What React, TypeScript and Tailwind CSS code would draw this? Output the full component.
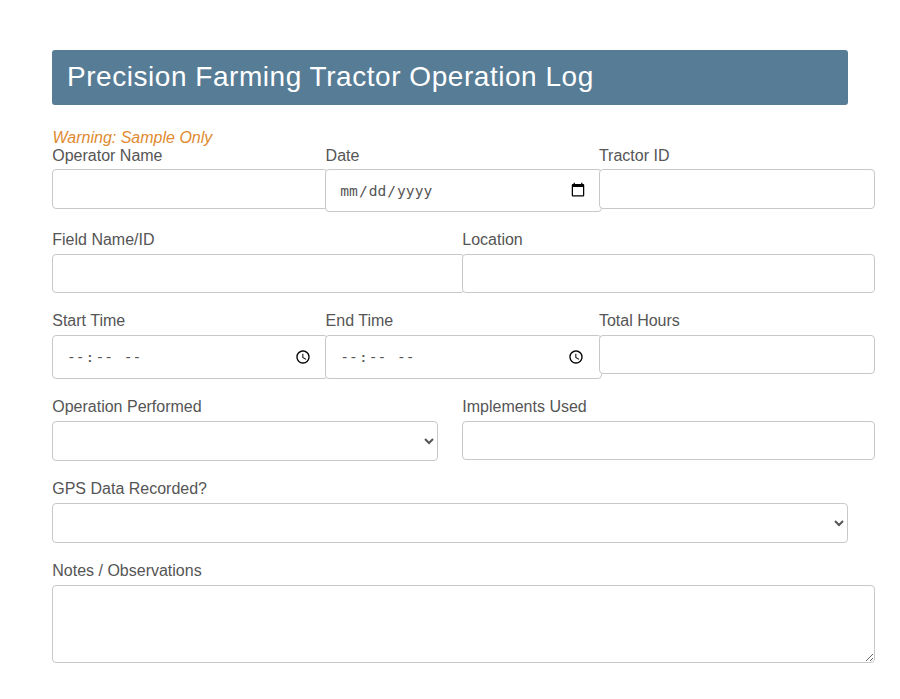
import type { ReactNode } from 'react'
import clsx from 'clsx'

const CONTROL = 'block rounded border border-[#c8c8c8] bg-white px-[13px] text-base text-[#555] outline-none'
const WIDE = 'w-[calc(100%+27px)]'

function Field({ id, label, first, children }: { id: string; label: string; first?: boolean; children: ReactNode }) {
  return (
    <div className="min-w-0 pr-6">
      <label
        htmlFor={id}
        className={clsx('block whitespace-nowrap pl-[0.25px] leading-[18px]', first ? 'mb-1 h-[19px] pt-px' : 'mb-[5px] h-[18px]')}
      >
        {label}
      </label>
      {children}
    </div>
  )
}

function TextField({ id, label, first, height = 'h-[39px]' }: { id: string; label: string; first?: boolean; height?: string }) {
  return (
    <Field id={id} label={label} first={first}>
      <input id={id} type="text" className={clsx(CONTROL, WIDE, height, 'relative')} />
    </Field>
  )
}

function PickerField({ id, label, type, first, height }: { id: string; label: string; type: 'date' | 'time'; first?: boolean; height: string }) {
  return (
    <Field id={id} label={label} first={first}>
      <input
        id={id}
        type={type}
        className={clsx(
          CONTROL, WIDE, height,
          "relative font-['DejaVu_Sans_Mono',monospace] !text-[14.6px] [&::-webkit-calendar-picker-indicator]:text-base",
        )}
      />
    </Field>
  )
}

function SelectField({ id, label, options }: { id: string; label: string; options: string[] }) {
  return (
    <Field id={id} label={label}>
      <select id={id} defaultValue="" className="block h-10 w-full rounded border border-[#c8c8c8] bg-white text-base text-[#555] outline-none">
        <option value="" />
        {options.map((o) => (
          <option key={o} value={o}>{o}</option>
        ))}
      </select>
    </Field>
  )
}

export default function App() {
  return (
    <main className="h-[699px] overflow-hidden bg-white pl-[52px] pt-[50px] font-['Liberation_Sans',Arial,sans-serif] text-base text-[#555]">
      <h1 className="h-[55px] w-[796px] rounded-[3px] bg-[#577c96] pl-[15px] text-[28px] leading-[53px] tracking-[0.54px] text-white">
        Precision Farming Tractor Operation Log
      </h1>

      <form className="mt-[23px] w-[820px]">
        <p className="h-[18px] pl-[0.5px] pt-px italic leading-[18px] text-[#e08a30]">Warning: Sample Only</p>

        <div className="grid h-[85px] grid-cols-3">
          <TextField id="operator" label="Operator Name" height="h-10" first />
          <PickerField id="date" label="Date" type="date" height="h-[43px]" first />
          <TextField id="tractor" label="Tractor ID" height="h-10" first />
        </div>

        <div className="grid h-[81px] grid-cols-2">
          <TextField id="field" label="Field Name/ID" />
          <TextField id="location" label="Location" />
        </div>

        <div className="grid h-[86px] grid-cols-3">
          <PickerField id="start" label="Start Time" type="time" height="h-11" />
          <PickerField id="end" label="End Time" type="time" height="h-11" />
          <TextField id="hours" label="Total Hours" />
        </div>

        <div className="grid h-[82px] grid-cols-2">
          <SelectField id="operation" label="Operation Performed" options={['Plowing', 'Planting', 'Spraying', 'Harvesting']} />
          <TextField id="implements" label="Implements Used" />
        </div>

        <div className="h-[82px]">
          <SelectField id="gps" label="GPS Data Recorded?" options={['Yes', 'No']} />
        </div>

        <Field id="notes" label="Notes / Observations">
          <textarea id="notes" className={clsx(CONTROL, WIDE, 'h-[78px] resize')} />
        </Field>
      </form>
    </main>
  )
}
